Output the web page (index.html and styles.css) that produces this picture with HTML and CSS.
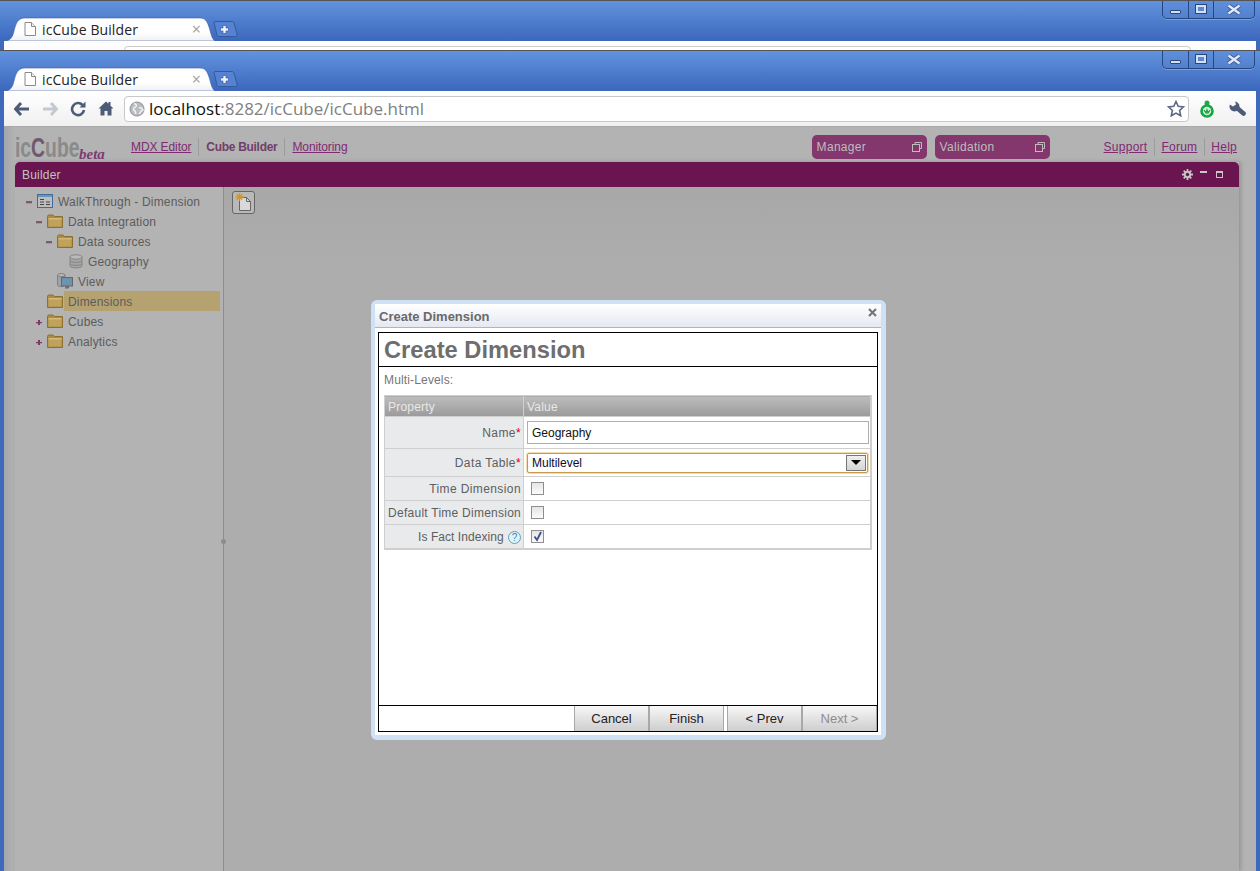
FILE: index.html
```html
<!DOCTYPE html>
<!-- icCube builder, create dimension wizard -->
<html>
<head>
    <title>icCube Builder</title>
    <link rel="stylesheet" href="styles.css">
</head>
<body>
    <svg class="defs" width="0" height="0">
        <defs>
            <symbol id="tab-shape" viewBox="0 0 209 24" preserveAspectRatio="none">
                <path d="M0 24C5 23 7 19 8 14C10 6 12 1 19 1H194C199 1 201 4 203 10C205 17 206 22 209 24Z" fill="url(#tab-fill)" stroke="#3a60aa" stroke-width="0.6"/>
            </symbol>
            <linearGradient id="tab-fill" x1="0" y1="0" x2="0" y2="1">
                <stop offset="0" stop-color="#ffffff"/>
                <stop offset="0.6" stop-color="#ffffff"/>
                <stop offset="1" stop-color="#f1f1f1"/>
            </linearGradient>
            <symbol id="page-icon" viewBox="0 0 14 16">
                <path d="M2 1.5H8.500L12.500 5.500V14.500H2Z" fill="#fff" stroke="#8a8a8a"/>
                <path d="M8.500 1.500V5.500H12.500" fill="#eee" stroke="#8a8a8a"/>
            </symbol>
            <symbol id="new-tab-shape" viewBox="0 0 25 16">
                <path d="M1 1.500C1 1 1.500 0.500 2 0.500H19C20 0.500 20.500 1 21 2L24 13C24.500 14.500 24 15.500 22.500 15.500H6C5 15.500 4.500 15 4 14Z" fill="#5583d2" stroke="#35599f"/>
                <path d="M10 4.500H13V7H15.500V10H13V12.500H10V10H7.500V7H10Z" fill="#eef3fb" stroke="#3a60aa" stroke-width="0.700"/>
            </symbol>
            <symbol id="win-x" viewBox="0 0 16 11">
                <path d="M2.500 1.500L13.500 9.500M13.500 1.500L2.500 9.500" stroke="#3a5a98" stroke-width="4.200" fill="none"/>
                <path d="M2.500 1.500L13.500 9.500M13.500 1.500L2.500 9.500" stroke="#dfe8f6" stroke-width="2.400" fill="none"/>
            </symbol>
            <symbol id="folder" viewBox="0 0 16 14">
                <path d="M0.500 2.500C0.500 1.500 1 1 2 1H6L7.500 2.500H15.500V13.500H0.500Z" fill="#a98c47" stroke="#8d7030"/>
                <rect x="1.500" y="4" width="13" height="8.500" fill="#c0a25c"/>
                <rect x="1.500" y="4" width="13" height="1.500" fill="#d2b977"/>
            </symbol>
            <symbol id="restore" viewBox="0 0 10 10">
                <path d="M3 2.500V0.500H9.500V6.500H7.500" fill="none" stroke="currentColor"/>
                <rect x="0.500" y="2.500" width="7" height="7" fill="none" stroke="currentColor"/>
            </symbol>
        </defs>
    </svg>

    <!-- the window behind, only its top shows -->
    <div class="window window-back">
        <div class="frame">
            <div class="tab">
                <svg class="tab-bg"><use href="#tab-shape"/></svg>
                <svg class="tab-page" width="14" height="16"><use href="#page-icon"/></svg>
                <span class="tab-title">icCube Builder</span>
                <span class="tab-close">×</span>
            </div>
            <svg class="new-tab" width="25" height="16"><use href="#new-tab-shape"/></svg>
            <div class="win-controls">
                <div class="win-btn win-min"><span></span></div>
                <div class="win-btn win-max"><span></span></div>
                <div class="win-btn win-close"><svg width="16" height="11"><use href="#win-x"/></svg></div>
            </div>
        </div>
        <div class="toolbar"><div class="addr-stub"></div></div>
    </div>

    <!-- the window in front -->
    <div class="window window-front">
        <div class="frame">
            <div class="tab">
                <svg class="tab-bg"><use href="#tab-shape"/></svg>
                <svg class="tab-page" width="14" height="16"><use href="#page-icon"/></svg>
                <span class="tab-title">icCube Builder</span>
                <span class="tab-close">×</span>
            </div>
            <svg class="new-tab" width="25" height="16"><use href="#new-tab-shape"/></svg>
            <div class="win-controls">
                <div class="win-btn win-min"><span></span></div>
                <div class="win-btn win-max"><span></span></div>
                <div class="win-btn win-close"><svg width="16" height="11"><use href="#win-x"/></svg></div>
            </div>
        </div>

        <div class="toolbar">
            <svg class="tool-btn" width="16" height="14" viewBox="0 0 16 14"><path d="M7 1L1.500 7L7 13M2 7H15" fill="none" stroke="#4d5b78" stroke-width="3"/></svg>
            <svg class="tool-btn" width="16" height="14" viewBox="0 0 16 14"><path d="M9 1L14.500 7L9 13M14 7H1" fill="none" stroke="#c3c8d2" stroke-width="3"/></svg>
            <svg class="tool-btn" width="16" height="16" viewBox="0 0 16 16"><path d="M12.500 4A6 6 0 1 0 14 9" fill="none" stroke="#4d5b78" stroke-width="2.600"/><path d="M9.500 6.500H15.500V0.500Z" fill="#4d5b78"/></svg>
            <svg class="tool-btn tool-last" width="16" height="15" viewBox="0 0 16 15"><path d="M8 0.500L0.500 7.500H2.500V14.500H6.500V10H9.500V14.500H13.500V7.500H15.500L12.500 4.700V1H10.500V2.800Z" fill="#4d5b78"/></svg>
            <div class="addr">
                <svg width="16" height="16" viewBox="0 0 16 16"><circle cx="8" cy="8" r="7" fill="#b9bcc0" stroke="#8c8f94"/><path d="M5 2.500C7 3 8 4 7 5.500C5.500 6.500 4 7 4.500 9C6 9.500 7 10.500 6.500 13M10 7C12 6.500 13.500 7.500 14 9C12.500 9.500 11 11 10.500 13" fill="none" stroke="#f2f2f2" stroke-width="1.500"/></svg>
                <span class="addr-host">localhost</span><span class="addr-rest">:8282/icCube/icCube.html</span>
                <svg class="addr-star" width="18" height="17" viewBox="0 0 18 17"><path d="M9 1.500L11.200 6.300L16.500 6.900L12.600 10.500L13.700 15.800L9 13.100L4.300 15.800L5.400 10.500L1.500 6.900L6.800 6.300Z" fill="#fff" stroke="#5a6885" stroke-width="1.600"/></svg>
            </div>
            <svg class="ext-icon" width="14" height="18" viewBox="0 0 14 18"><circle cx="7" cy="3" r="2.500" fill="#1fa94a"/><circle cx="7" cy="11" r="5.500" fill="#d9f2df" stroke="#14a544" stroke-width="2.600"/><path d="M4 10L6 13L7 10L8 13L10 10" fill="none" stroke="#14a544" stroke-width="1.300"/></svg>
            <svg class="wrench" width="17" height="16" viewBox="0 0 17 16"><path d="M7.500 6.500L14.500 12.500" stroke="#4d5b78" stroke-width="4.600" stroke-linecap="round"/><circle cx="5.500" cy="5.500" r="5" fill="#4d5b78"/><path d="M0 3L4 5.500L7 3.500L6 0H0Z" fill="#f8f8f8"/></svg>
        </div>

        <div class="page">
            <div class="app-head">
                <div class="logo"><span class="logo-word">ic<b>C</b>ube</span><span class="logo-beta">beta</span></div>
                <nav class="nav nav-main">
                    <a class="nav-link">MDX Editor</a>
                    <span class="nav-link nav-current">Cube Builder</span>
                    <a class="nav-link">Monitoring</a>
                </nav>
                <div class="head-right">
                    <div class="pill">Manager<svg width="10" height="10"><use href="#restore"/></svg></div>
                    <div class="pill">Validation<svg width="10" height="10"><use href="#restore"/></svg></div>
                    <nav class="nav nav-help">
                        <a class="nav-link">Support</a>
                        <a class="nav-link">Forum</a>
                        <a class="nav-link">Help</a>
                    </nav>
                </div>
            </div>

            <div class="builder">
                <div class="builder-bar">
                    <span>Builder</span>
                    <div class="builder-icons">
                        <svg width="11" height="11" viewBox="0 0 11 11"><path d="M5.500 0V11M0 5.500H11M1.700 1.700L9.300 9.300M9.300 1.700L1.700 9.300" stroke="#c7c7c7" stroke-width="1.800"/><circle cx="5.500" cy="5.500" r="3.600" fill="#c7c7c7"/><circle cx="5.500" cy="5.500" r="1.700" fill="#6a1450"/></svg>
                        <span class="bar-min"></span>
                        <span class="bar-max"></span>
                    </div>
                </div>
                <div class="builder-body">
                    <div class="tree">
                        <div class="tree-row lvl-0">
                            <span class="toggle toggle-open"></span>
                            <svg class="tree-icon" width="16" height="14" viewBox="0 0 16 14"><rect x="0.500" y="0.500" width="15" height="13" fill="#bdbdbd" stroke="#3f6c99"/><rect x="1" y="1" width="14" height="2" fill="#6d93b8"/><path d="M3 5.500H7M3 8H7M3 10.500H7M9 8H13M9 10.500H13" stroke="#444"/></svg>
                            <span class="tree-label">WalkThrough - Dimension</span>
                        </div>
                        <div class="tree-row lvl-1">
                            <span class="toggle toggle-open"></span>
                            <svg class="tree-icon" width="16" height="14"><use href="#folder"/></svg>
                            <span class="tree-label">Data Integration</span>
                        </div>
                        <div class="tree-row lvl-2">
                            <span class="toggle toggle-open"></span>
                            <svg class="tree-icon" width="16" height="14"><use href="#folder"/></svg>
                            <span class="tree-label">Data sources</span>
                        </div>
                        <div class="tree-row lvl-3">
                            <span class="toggle"></span>
                            <svg class="tree-icon" width="14" height="15" viewBox="0 0 14 15"><path d="M1 3V12C1 14.500 13 14.500 13 12V3Z" fill="#a6a6a6" stroke="#858585"/><ellipse cx="7" cy="3" rx="6" ry="2.200" fill="#bbb" stroke="#858585"/><path d="M1 6.500C1 9 13 9 13 6.500M1 9.500C1 12 13 12 13 9.500" fill="none" stroke="#858585"/></svg>
                            <span class="tree-label">Geography</span>
                        </div>
                        <div class="tree-row lvl-2">
                            <span class="toggle"></span>
                            <svg class="tree-icon" width="16" height="16" viewBox="0 0 16 16"><path d="M0.500 2V12C0.500 14 8 14 8 12V2Z" fill="#a2a2a2" stroke="#808080"/><ellipse cx="4.250" cy="2" rx="3.750" ry="1.500" fill="#bbb" stroke="#808080"/><rect x="4.500" y="4.500" width="11" height="8.500" fill="#6c93b0" stroke="#666"/><path d="M8.500 13.500H11.500V15H8" fill="#888" stroke="#666"/></svg>
                            <span class="tree-label">View</span>
                        </div>
                        <div class="tree-row lvl-1">
                            <span class="toggle"></span>
                            <svg class="tree-icon" width="16" height="14"><use href="#folder"/></svg>
                            <span class="tree-label tree-selected">Dimensions</span>
                        </div>
                        <div class="tree-row lvl-1">
                            <span class="toggle toggle-closed"></span>
                            <svg class="tree-icon" width="16" height="14"><use href="#folder"/></svg>
                            <span class="tree-label">Cubes</span>
                        </div>
                        <div class="tree-row lvl-1">
                            <span class="toggle toggle-closed"></span>
                            <svg class="tree-icon" width="16" height="14"><use href="#folder"/></svg>
                            <span class="tree-label">Analytics</span>
                        </div>
                    </div>
                    <div class="splitter"><span class="splitter-dot"></span></div>
                    <div class="content">
                        <div class="new-btn">
                            <svg width="18" height="19" viewBox="0 0 18 19"><path d="M4.500 4.500H11.500L15.500 8.500V17.500H4.500Z" fill="#d9d9d9" stroke="#666"/><path d="M11.500 4.500V8.500H15.500" fill="none" stroke="#666"/><path d="M4.500 0V8M0.500 4H8.500M1.700 1.200L7.300 6.800M7.300 1.200L1.700 6.800" stroke="#d19a1e" stroke-width="1.300"/></svg>
                        </div>
                    </div>
                </div>
            </div>
        </div>
    </div>

    <!-- dialog -->
    <div class="dialog">
        <div class="dialog-title">
            <span>Create Dimension</span>
            <svg class="dialog-close" width="9" height="9" viewBox="0 0 9 9"><path d="M1 1L8 8M8 1L1 8" stroke="#777" stroke-width="2.200"/></svg>
        </div>
        <div class="dialog-pane">
            <div class="wizard">
                <h1 class="wizard-head">Create Dimension</h1>
                <div class="wizard-body">
                    <p class="wizard-sub">Multi-Levels:</p>
                    <table class="props">
                        <thead>
                            <tr><th class="col-prop">Property</th><th>Value</th></tr>
                        </thead>
                        <tbody>
                            <tr class="row-name">
                                <td class="prop-label">Name<span class="req">*</span></td>
                                <td class="prop-value"><input class="text-input" type="text" value="Geography"></td>
                            </tr>
                            <tr class="row-table">
                                <td class="prop-label">Data Table<span class="req">*</span></td>
                                <td class="prop-value">
                                    <div class="combo">
                                        <span>Multilevel</span>
                                        <span class="combo-btn"><span class="combo-arrow"></span></span>
                                    </div>
                                </td>
                            </tr>
                            <tr class="row-check">
                                <td class="prop-label">Time Dimension</td>
                                <td class="prop-value"><span class="check"></span></td>
                            </tr>
                            <tr class="row-check">
                                <td class="prop-label prop-label-long">Default Time Dimension</td>
                                <td class="prop-value"><span class="check"></span></td>
                            </tr>
                            <tr class="row-check">
                                <td class="prop-label prop-label-help">Is Fact Indexing <span class="help">?</span></td>
                                <td class="prop-value">
                                    <span class="check">
                                        <svg width="11" height="11" viewBox="0 0 11 11"><path d="M2.500 5.500L5 9L9 1" fill="none" stroke="#3f4f8f" stroke-width="1.800"/></svg>
                                    </span>
                                </td>
                            </tr>
                        </tbody>
                    </table>
                </div>
                <div class="wizard-foot">
                    <button class="wiz-btn">Cancel</button>
                    <button class="wiz-btn">Finish</button>
                    <button class="wiz-btn wiz-btn-gap">&lt; Prev</button>
                    <button class="wiz-btn wiz-btn-off">Next &gt;</button>
                </div>
            </div>
        </div>
    </div>
</body>
</html>
```

FILE: styles.css
```css
html, body {
    margin: 0;
    height: 871px;
    overflow: hidden;
}

body {
    position: relative;
    font-family: "Liberation Sans", Arial, sans-serif;
    font-size: 12px;
    background: #3f69bd;
}

.defs { position: absolute; }

/* Browser windows */
.window {
    padding: 0 4px;
    box-sizing: border-box;
    border-top: 1px solid #555;
    background: #3f69bd;
}

.window-back { height: 50px; overflow: hidden; }
.window-front { height: 821px; display: flex; flex-direction: column; }

.frame {
    display: flex;
    height: 40px;
    flex: none;
    margin: 0 -4px;
    padding: 0 5px 0 6px;
    background: linear-gradient(#6293de, #3c67bc);
}

.tab {
    position: relative;
    width: 209px;
    height: 24px;
    align-self: flex-end;
    display: flex;
    align-items: center;
    font-family: "Open Sans", sans-serif;
    font-size: 14px;
    letter-spacing: .1px;
    color: #222;
}

.tab-bg { position: absolute; left: 0; top: 0; width: 100%; height: 100%; }
.tab-page { position: relative; margin-left: 17px; }
.tab-title { position: relative; margin-left: 5px; }
.tab-close { position: relative; margin-left: auto; margin-right: 14px; font-size: 16px; color: #a0a0a0; }

.new-tab { align-self: flex-end; margin: 0 0 4px -2px; }

.win-controls {
    display: flex;
    margin-left: auto;
    height: 17px;
    border: 1px solid #27477f;
    border-top: 0;
    border-radius: 0 0 5px 5px;
    background: linear-gradient(#5f8fdb, #5380cc);
    box-shadow: 0 1px 0 rgba(255, 255, 255, .25);
}

.win-btn {
    display: flex;
    align-items: center;
    justify-content: center;
    border-left: 1px solid #27477f;
    box-sizing: border-box;
}

.win-btn:first-child { border-left: 0; }
.win-min { width: 25px; }
.win-max { width: 25px; }
.win-close { width: 41px; }

.win-min span {
    width: 9px;
    height: 2px;
    margin-top: 5px;
    background: #d5e0f3;
    border: 1px solid #27477f;
    border-radius: 1px;
}

.win-max span {
    width: 6px;
    height: 4px;
    border: 2px solid #d5e0f3;
    outline: 1px solid #27477f;
    margin-top: -2px;
}

.toolbar {
    display: flex;
    align-items: center;
    height: 35px;
    flex: none;
    background: linear-gradient(#fff, #f0f0f0);
    padding-left: 10px;
}

.addr-stub {
    align-self: flex-start;
    width: 1065px;
    height: 20px;
    margin: 5px 0 0 110px;
    background: #fff;
    border: 1px solid #ccc;
    border-radius: 4px;
}

.tool-btn { margin-right: 12px; flex: none; }
.tool-last { margin-right: 10px; }

.addr {
    display: flex;
    align-items: center;
    box-sizing: border-box;
    width: 1065px;
    height: 26px;
    padding: 0 2px 0 4px;
    background: #fff;
    border: 1px solid #c8c8c8;
    border-radius: 4px;
    font-family: "Open Sans", sans-serif;
    font-size: 17px;
}

.addr svg:first-child { margin-right: 4px; }
.addr-host { color: #111; }
.addr-rest { color: #808080; }
.addr-star { margin-left: auto; margin-right: 1px; }

.ext-icon { margin-left: 11px; }
.wrench { margin-left: 15px; }

/* icCube page, everything here sits under the modal mask so colours are dimmed */
.page {
    flex: 1;
    display: flex;
    flex-direction: column;
    min-height: 0;
    background: linear-gradient(90deg, #a3a7ab, #b3b3b3 12px);
    border-top: 1px solid #a8a8a8;
    box-sizing: border-box;
}

.app-head {
    display: flex;
    align-items: center;
    box-sizing: border-box;
    height: 35px;
    flex: none;
    padding: 4px 12px 0 11px;
}

.logo { display: flex; align-items: flex-end; width: 109px; height: 30px; }

.logo-word {
    display: inline-block;
    width: 63px;
    font-size: 28px;
    font-weight: bold;
    line-height: 28px;
    color: #8a8a8a;
    transform: scaleX(.69);
    transform-origin: left;
    white-space: nowrap;
}

.logo-word b { color: #6f5a6c; }

.logo-beta {
    margin: 0 0 1px 1px;
    font-family: "Liberation Serif", serif;
    font-style: italic;
    font-weight: bold;
    font-size: 15px;
    line-height: 14px;
    color: #7d3a70;
}

.nav { display: flex; align-items: center; }
.nav-main { letter-spacing: -.1px; }

.nav-link {
    padding: 0 7px;
    line-height: 18px;
    color: #7f2a72;
    text-decoration: underline;
    border-left: 1px solid #9c9c9c;
}

.nav-link:first-child { border-left: 0; }
.nav-current { font-weight: bold; color: #70406a; text-decoration: none; letter-spacing: -.3px; }

.head-right { display: flex; align-items: center; margin-left: auto; }

.pill {
    display: flex;
    align-items: center;
    justify-content: space-between;
    box-sizing: border-box;
    width: 115px;
    height: 24px;
    margin-right: 8px;
    padding: 0 5px;
    border-radius: 5px;
    background: #84376c;
    color: #bdbdbd;
    letter-spacing: .3px;
}

.nav-help { margin-left: 40px; letter-spacing: .25px; }
.nav-help .nav-link { padding-left: 6px; }

.builder {
    flex: 1;
    display: flex;
    flex-direction: column;
    min-height: 0;
    margin: 0 17px 0 11px;
    box-shadow: 2px 0 4px rgba(0, 0, 0, .18);
}

.builder-bar {
    display: flex;
    align-items: center;
    justify-content: space-between;
    height: 25px;
    flex: none;
    padding: 0 16px 0 7px;
    background: #6a1450;
    border-radius: 5px 5px 0 0;
    color: #c4c4c4;
    letter-spacing: .2px;
}

.builder-icons { display: flex; align-items: center; gap: 7px; }

.bar-min { width: 7px; height: 2px; background: #c7c7c7; margin-top: -5px; }
.bar-max { width: 5px; height: 4px; border: 1px solid #c7c7c7; border-top-width: 2px; margin-left: 2px; }

.builder-body { flex: 1; display: flex; min-height: 0; background: #b3b3b3; }

.tree { width: 208px; flex: none; padding-top: 4px; color: #5c5c5c; letter-spacing: .17px; }

.tree-row { display: flex; align-items: center; height: 20px; }
.lvl-0 { padding-left: 10px; }
.lvl-1 { padding-left: 20px; }
.lvl-2 { padding-left: 30px; }
.lvl-3 { padding-left: 42px; }

.toggle { width: 7px; height: 7px; flex: none; margin-right: 5px; position: relative; }
.toggle-open::before, .toggle-closed::before {
    content: "";
    position: absolute;
    left: 1px;
    top: 3px;
    width: 6px;
    height: 2px;
    background: #7a5a72;
    box-shadow: 0 1px 0 #9c9c9c;
}
.toggle-closed::before { top: 4px; height: 1px; background: #7a3a6a; }
.toggle-closed::after {
    content: "";
    position: absolute;
    left: 3px;
    top: 2px;
    width: 2px;
    height: 5px;
    background: #7a3a6a;
}

.tree-icon { flex: none; }
.tree-label { margin-left: 5px; height: 20px; line-height: 22px; }

.tree-selected {
    flex: 1;
    margin: 0 3px 0 1px;
    padding-left: 4px;
    background: #b5a270;
}

.splitter { position: relative; width: 1px; flex: none; background: #8d8d8d; }

.splitter-dot {
    position: absolute;
    left: -2px;
    top: 352px;
    width: 5px;
    height: 5px;
    border-radius: 50%;
    background: #8d8d8d;
}

.content {
    flex: 1;
    padding: 4px 8px;
    background: linear-gradient(#a8a8a8, #adadad 80px);
}

.new-btn {
    display: flex;
    align-items: center;
    justify-content: center;
    box-sizing: border-box;
    width: 23px;
    height: 23px;
    border: 1px solid #666;
    border-radius: 3px;
    background: #b9b9b9;
}

/* Dialog */
.dialog {
    position: absolute;
    left: 371px;
    top: 300px;
    display: flex;
    flex-direction: column;
    box-sizing: border-box;
    width: 515px;
    height: 440px;
    padding: 4px 5px 5px 4px;
    background: #cfe2f5;
    border-radius: 6px;
}

.dialog-title {
    display: flex;
    align-items: center;
    justify-content: space-between;
    box-sizing: border-box;
    height: 24px;
    flex: none;
    padding: 1px 4px 0 4px;
    background: linear-gradient(#fff, #e5e8f2);
    border-bottom: 1px solid #b4b4b4;
    font-size: 13px;
    font-weight: bold;
    color: #696969;
}

.dialog-close { margin-top: -7px; }

.dialog-pane { flex: 1; padding: 4px 3px 3px; background: #fff; }

.wizard {
    display: flex;
    flex-direction: column;
    box-sizing: border-box;
    height: 400px;
    background: #fff;
    border: 1px solid #000;
}

.wizard-head {
    margin: 0;
    height: 34px;
    flex: none;
    padding: 2px 0 0 5px;
    box-sizing: border-box;
    border-bottom: 1px solid #000;
    font-size: 23.7px;
    line-height: 30px;
    color: #6e6e6e;
}

.wizard-body { flex: 1; padding: 0 5px; }

.wizard-sub { margin: 6px 0 7px; line-height: 15px; color: #757575; letter-spacing: .15px; }

.props {
    width: 488px;
    border-collapse: collapse;
    table-layout: fixed;
    border: 1px solid #cfcfcf;
    border-width: 1px 2px 2px 1px;
}

.props th {
    height: 19px;
    padding: 1px 3px 0;
    text-align: left;
    font-weight: normal;
    color: #e8e8e8;
    background: linear-gradient(#bdbdbd, #9a9a9a);
    border-left: 1px solid #d0d0d0;
    letter-spacing: .2px;
}

.col-prop { width: 132px; }

.props td { padding: 0; border: 1px solid #cfcfcf; }

.row-name td { height: 31px; }
.row-table td { height: 27px; }
.row-check td { height: 23px; }

.prop-label {
    padding-right: 2px !important;
    text-align: right;
    background: #e9eaec;
    color: #5e5e5e;
    letter-spacing: .4px;
}

.prop-label-long { letter-spacing: .25px; }
.prop-label-help { letter-spacing: .05px; }

.prop-value { padding-left: 3px !important; }

.req { color: #e00000; }

.help {
    display: inline-block;
    width: 11px;
    height: 11px;
    margin-left: 1px;
    border: 1px solid #5aa3bb;
    border-radius: 50%;
    font-size: 10px;
    line-height: 11px;
    text-align: center;
    color: #3e8ca8;
    background: #e2f1f6;
}

.text-input {
    display: block;
    box-sizing: border-box;
    width: 342px;
    height: 23px;
    padding: 0 4px;
    border: 1px solid #adadb3;
    font-family: "Liberation Sans", Arial, sans-serif;
    font-size: 12px;
    color: #111;
    outline: 0;
}

.combo {
    display: flex;
    align-items: center;
    justify-content: space-between;
    box-sizing: border-box;
    width: 341px;
    height: 20px;
    padding: 0 1px 0 4px;
    border: 1px solid #c49b4b;
    border-radius: 2px;
    box-shadow: 0 0 0 1px #f2dcae;
    color: #0a0a30;
}

.combo-btn {
    display: flex;
    align-items: center;
    justify-content: center;
    box-sizing: border-box;
    width: 20px;
    height: 16px;
    border: 1px solid #777;
    background: linear-gradient(#efefef, #d4d4d4);
}

.combo-arrow {
    border: 5px solid transparent;
    border-top: 5px solid #000;
    border-bottom: 0;
}

.check {
    display: flex;
    align-items: center;
    justify-content: center;
    box-sizing: border-box;
    width: 13px;
    height: 13px;
    margin-left: 4px;
    border: 1px solid #8f8f8f;
    background: linear-gradient(#e5e5e5, #fbfbfb);
}

.wizard-foot {
    display: flex;
    justify-content: flex-end;
    height: 26px;
    flex: none;
    box-sizing: border-box;
    border-top: 1px solid #000;
}

.wiz-btn {
    width: 75px;
    padding: 0;
    border: 1px solid #a8a8a8;
    border-width: 0 1px 0 1px;
    background: linear-gradient(#f8f8f8, #cdcdcd);
    font-family: "Liberation Sans", Arial, sans-serif;
    font-size: 13px;
    color: #222;
}

.wiz-btn-gap { margin-left: 3px; }
.wiz-btn-off { color: #8d8d8d; }
```
